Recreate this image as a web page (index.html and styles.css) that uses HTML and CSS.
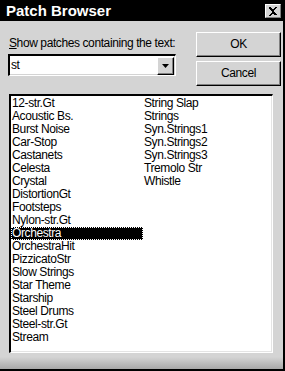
FILE: index.html
```html
<!DOCTYPE html>
<html>
<head>
<meta charset="utf-8">
<link rel="stylesheet" href="styles.css">
</head>
<body>
<div class="window">
  <div class="titlebar">
    <span class="title">Patch Browser</span>
    <span class="close">
      <svg width="10" height="9" viewBox="0 0 10 9"><path d="M1 0h2v1h1v1h2V1h1V0h2v1H8v1H7v1H6v1h-0v1H7v1h1v1h1v1H7V8H6V7H4v1H3v1H1V8h1V7h1V6h1V5h0V4H3V3H2V2H1z" fill="#000"/></svg>
    </span>
  </div>
  <div class="body">
    <div class="top">
      <div class="filter">
        <div class="label"><u>S</u>how patches containing the text:</div>
        <div class="combo">
          <span class="combo-text">st</span>
          <span class="combo-btn"><svg width="7" height="4" viewBox="0 0 7 4"><path d="M0 0h7L3.5 4z" fill="#000"/></svg></span>
        </div>
      </div>
      <div class="buttons">
        <div class="btn btn-default">OK</div>
        <div class="btn">Cancel</div>
      </div>
    </div>
    <div class="list">
      <div class="item">12-str.Gt</div>
      <div class="item">Acoustic Bs.</div>
      <div class="item">Burst Noise</div>
      <div class="item">Car-Stop</div>
      <div class="item">Castanets</div>
      <div class="item">Celesta</div>
      <div class="item">Crystal</div>
      <div class="item">DistortionGt</div>
      <div class="item">Footsteps</div>
      <div class="item">Nylon-str.Gt</div>
      <div class="item selected">Orchestra</div>
      <div class="item">OrchestraHit</div>
      <div class="item">PizzicatoStr</div>
      <div class="item">Slow Strings</div>
      <div class="item">Star Theme</div>
      <div class="item">Starship</div>
      <div class="item">Steel Drums</div>
      <div class="item">Steel-str.Gt</div>
      <div class="item">Stream</div>
      <div class="item">String Slap</div>
      <div class="item">Strings</div>
      <div class="item">Syn.Strings1</div>
      <div class="item">Syn.Strings2</div>
      <div class="item">Syn.Strings3</div>
      <div class="item">Tremolo Str</div>
      <div class="item">Whistle</div>
    </div>
    <div class="bottom"></div>
  </div>
</div>
</body>
</html>
```
FILE: styles.css
```css
html, body {
  margin: 0;
  padding: 0;
  background: #000;
}
.window {
  width: 285px;
  height: 371px;
  box-sizing: border-box;
  border-right: 2px solid #000;
  border-bottom: 2px solid #000;
  background: #d4d4d4;
  display: flex;
  flex-direction: column;
  font-family: "Liberation Sans", Arial, sans-serif;
  font-size: 12px;
  letter-spacing: -0.4px;
  color: #000;
}
.titlebar {
  height: 21px;
  background: #000;
  display: flex;
  align-items: flex-start;
  justify-content: space-between;
  flex: none;
}
.title {
  color: #fff;
  font-family: "Liberation Sans Narrow", "Liberation Sans", Arial, sans-serif;
  font-weight: bold;
  font-size: 15px;
  letter-spacing: 0;
  line-height: 16px;
  padding: 3px 0 0 6px;
}
.close {
  margin-top: 4px;
  margin-right: 2px;
  width: 16px;
  height: 14px;
  box-sizing: border-box;
  background: #d4d4d4;
  border-top: 1px solid #fff;
  border-left: 1px solid #fff;
  border-right: 1px solid #808080;
  border-bottom: 1px solid #808080;
  display: flex;
  align-items: center;
  justify-content: center;
}
.body {
  flex: 1;
  display: flex;
  flex-direction: column;
}
.top {
  display: flex;
  padding-left: 8px;
  height: 65px;
}
.filter {
  width: 168px;
  padding-top: 15px;
}
.label {
  line-height: 15px;
  height: 15px;
  padding-left: 1px;
  margin-bottom: 3px;
}
.combo {
  height: 22px;
  box-sizing: border-box;
  background: #fff;
  border-top: 2px solid #000;
  border-left: 2px solid #000;
  border-right: 1px solid #fff;
  border-bottom: 1px solid #fff;
  box-shadow: inset -1px -1px 0 #d4d4d4;
  display: flex;
  align-items: center;
  justify-content: space-between;
}
.combo-text {
  padding-left: 1px;
  line-height: 15px;
}
.combo-btn {
  width: 17px;
  height: 18px;
  margin-right: 1px;
  box-sizing: border-box;
  background: #d4d4d4;
  border-top: 1px solid #fff;
  border-left: 1px solid #fff;
  border-right: 1px solid #000;
  border-bottom: 1px solid #000;
  box-shadow: inset -1px -1px 0 #808080;
  display: flex;
  align-items: center;
  justify-content: center;
}
.buttons {
  margin-left: auto;
  margin-right: 2px;
  width: 85px;
  padding-top: 11px;
  display: flex;
  flex-direction: column;
  gap: 4px;
}
.btn {
  height: 25px;
  box-sizing: border-box;
  background: #d4d4d4;
  border-top: 1px solid #fff;
  border-left: 1px solid #fff;
  border-right: 1px solid #000;
  border-bottom: 1px solid #000;
  box-shadow: inset -1px -1px 0 #808080;
  display: flex;
  align-items: center;
  justify-content: center;
  line-height: 15px;
}
.list {
  margin: 8px 0 0 9px;
  width: 264px;
  height: 259px;
  box-sizing: border-box;
  background: #fff;
  border-top: 2px solid #000;
  border-left: 2px solid #000;
  border-right: 1px solid #fff;
  border-bottom: 1px solid #fff;
  box-shadow: inset -1px -1px 0 #e4e4e4;
  display: grid;
  grid-auto-flow: column;
  grid-template-rows: repeat(19, 13px);
  grid-template-columns: 132px 132px;
  align-content: start;
  padding-top: 1px;
}
.item {
  line-height: 13px;
  height: 13px;
  padding-left: 1px;
  white-space: nowrap;
}
.selected {
  background: #000;
  color: #fff;
  outline: 1px dotted #fff;
  outline-offset: -1px;
}
.bottom {
  margin-top: auto;
  height: 12px;
  background: linear-gradient(#d4d4d4, #a8a8a8);
}
```
